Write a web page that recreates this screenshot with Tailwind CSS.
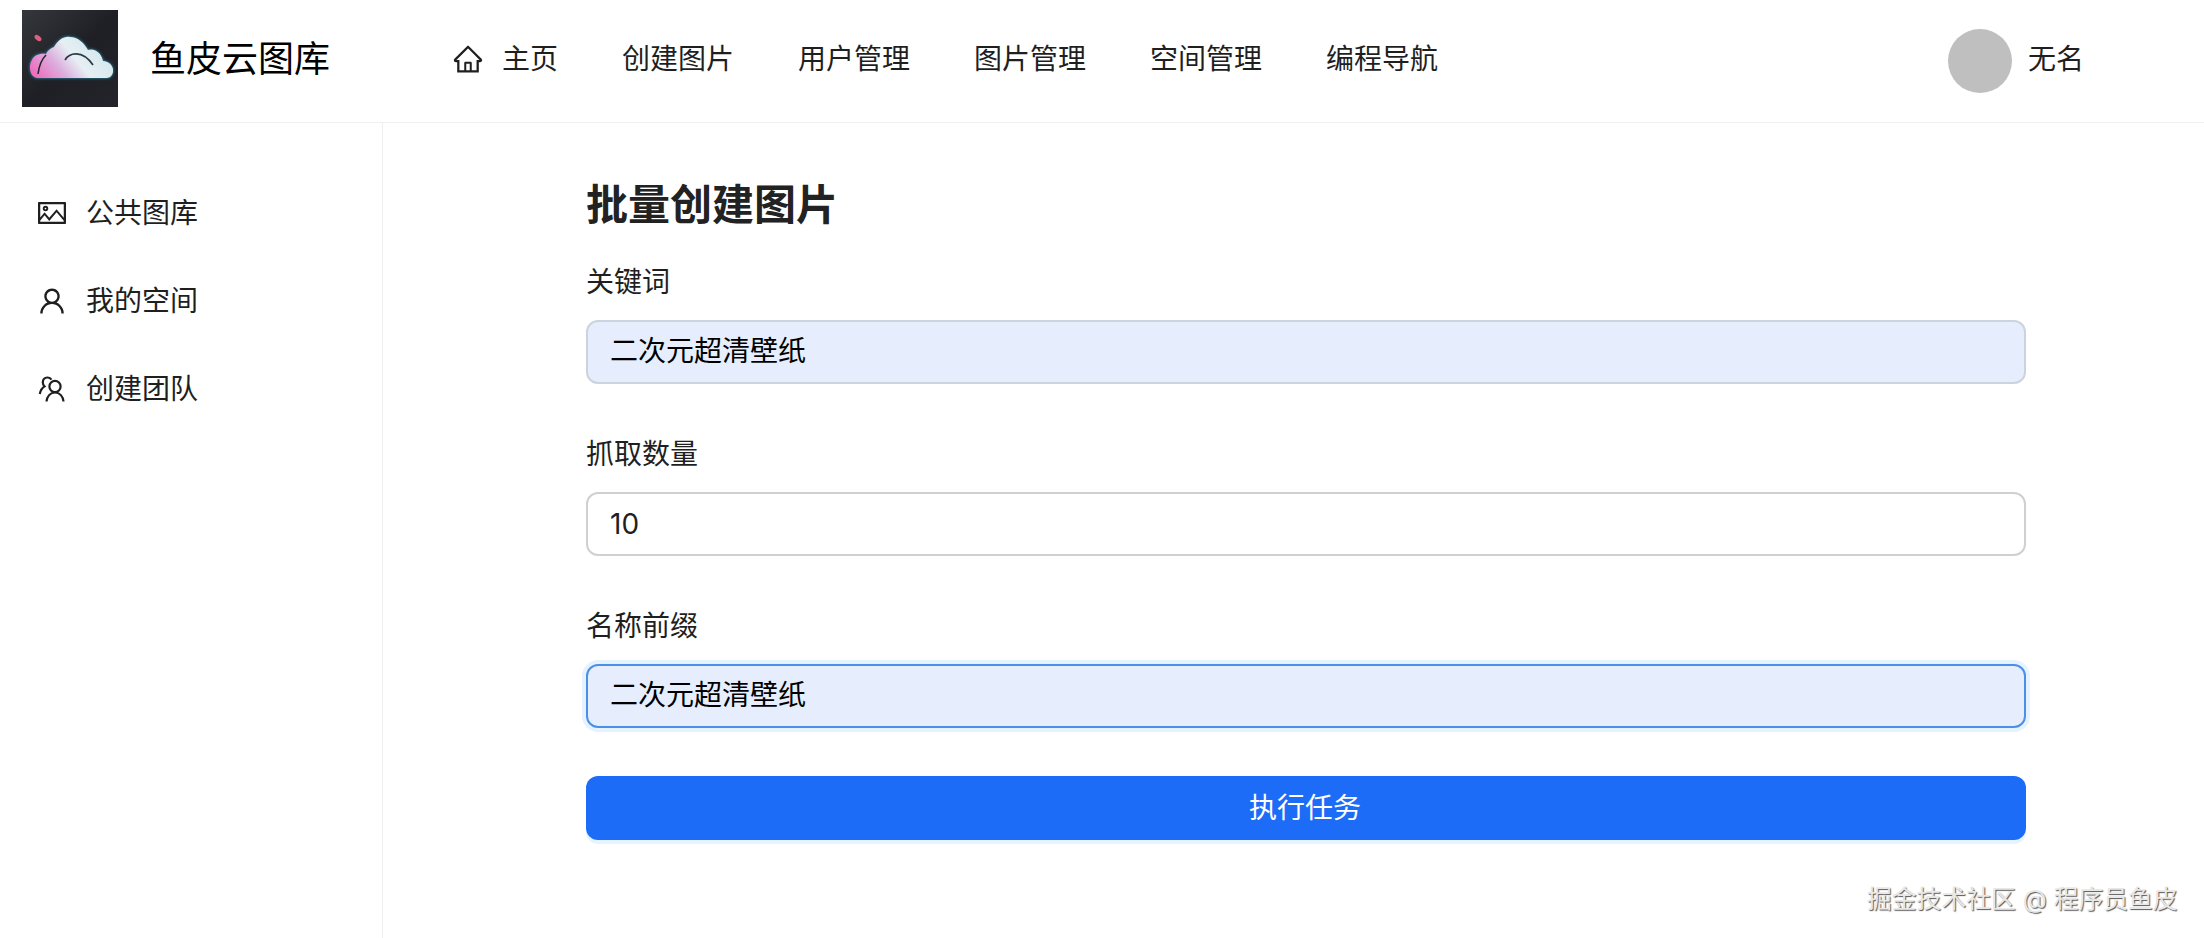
<!DOCTYPE html>
<html lang="zh-CN">
<head>
  <meta charset="UTF-8">
  <title>鱼皮云图库</title>
  <script src="https://cdn.jsdelivr.net/npm/@tailwindcss/browser@4"></script>
</head>
<body class="bg-white text-[#1f1f1f] font-['Inter','Noto_Sans_CJK_SC',sans-serif] text-[28px] overflow-hidden">
  <div class="relative h-[938px] flex flex-col">

    <!-- Header -->
    <header class="h-[123px] shrink-0 flex items-center border-b border-[#f0f0f0]">
      <a class="flex items-center ml-[22px] w-[430px] -mt-[5px]">
        <svg class="w-[96px] h-[97px]" viewBox="0 0 96 97">
          <defs>
            <linearGradient id="logo-bg" x1="0" y1="0" x2="1" y2="1">
              <stop offset="0" stop-color="#34373b"/>
              <stop offset="0.5" stop-color="#1f2026"/>
              <stop offset="1" stop-color="#22242a"/>
            </linearGradient>
            <linearGradient id="cloud" x1="0" y1="0.75" x2="1" y2="0.35">
              <stop offset="0" stop-color="#ee6fc0"/>
              <stop offset="0.3" stop-color="#dcaedd"/>
              <stop offset="0.55" stop-color="#e6eff3"/>
              <stop offset="1" stop-color="#cfe6ec"/>
            </linearGradient>
            <filter id="glow" x="-20%" y="-20%" width="140%" height="140%"><feGaussianBlur stdDeviation="1.5"/></filter>
          </defs>
          <rect width="96" height="97" fill="url(#logo-bg)"/>
          <ellipse cx="16" cy="28" rx="4" ry="2.4" transform="rotate(40 16 28)" fill="#d9607f"/>
          <path d="M16 68 C8 68 6 56 10 50 C12 45 18 43 24 44 C26 40 29 38 32 37 C36 30 42 26 48 27 C56 27 62 33 66 40 C72 38 79 42 81 51 C87 51 92 56 91 62 C90 67 87 68 83 68 Z" fill="#2f9fc4" filter="url(#glow)"/>
          <path d="M16 70 H88" stroke="#0e0f13" stroke-width="3" filter="url(#glow)"/>
          <path d="M16 68 C8 68 6 56 10 50 C12 45 18 43 24 44 C26 40 29 38 32 37 C36 30 42 26 48 27 C56 27 62 33 66 40 C72 38 79 42 81 51 C87 51 92 56 91 62 C90 67 87 68 83 68 Z" fill="url(#cloud)"/>
          <path d="M24 45 C19 50 17 56 16 64" fill="none" stroke="#23252d" stroke-width="1.5"/>
          <path d="M43 50 C47 43 60 39 71 55" fill="none" stroke="#2b3a48" stroke-width="1.7"/>
        </svg>
        <span class="ml-[32px] text-[36px] leading-[48px] text-black whitespace-nowrap">鱼皮云图库</span>
      </a>

      <nav class="flex items-center gap-[64px] -mt-[5px]">
        <a class="flex items-center gap-[18px]">
          <svg class="w-[32px] h-[32px]" viewBox="0 0 1024 1024" fill="currentColor"><path d="M946.5 505L560.1 118.8l-25.9-25.9a31.5 31.5 0 0 0-44.4 0L77.5 505a63.9 63.9 0 0 0-18.8 46c.4 35.2 29.7 63.3 64.9 63.3h42.5V940h691.8V614.3h43.4c17.1 0 33.2-6.7 45.3-18.8a63.6 63.6 0 0 0 18.7-45.3c0-17-6.7-33.1-18.8-45.2zM568 868H456V664h112v204zm217.9-325.7V868H632V640c0-22.1-17.9-40-40-40H432c-22.1 0-40 17.9-40 40v228H238.1V542.3h-96l370-369.7 23.1 23.1L882 542.3h-96.1z"/></svg>
          <span>主页</span>
        </a>
        <a>创建图片</a>
        <a>用户管理</a>
        <a>图片管理</a>
        <a>空间管理</a>
        <a>编程导航</a>
      </nav>

      <div class="ml-auto mr-[120px] flex items-center gap-[16px] -mt-[1px]">
        <div class="w-[64px] h-[64px] rounded-full bg-[#bfbfbf]"></div>
        <span class="-mt-[3px]">无名</span>
      </div>
    </header>

    <div class="flex flex-1">
      <!-- Sidebar -->
      <aside class="w-[383px] shrink-0 border-r border-[#f0f0f0] pt-[58px] pl-[36px] flex flex-col gap-[24px]">
        <a class="flex items-center gap-[18px] h-[64px]">
          <svg class="w-[32px] h-[32px]" viewBox="0 0 1024 1024" fill="currentColor"><path d="M928 160H96c-17.7 0-32 14.3-32 32v640c0 17.7 14.3 32 32 32h832c17.7 0 32-14.3 32-32V192c0-17.7-14.3-32-32-32zm-40 632H136v-39.9l138.5-164.3 150.1 178L658.1 489 888 761.6V792zm0-129.8L664.2 396.8c-3.2-3.8-9-3.8-12.2 0L424.6 666.4l-144-170.7c-3.2-3.8-9-3.8-12.2 0L136 652.7V232h752v430.2zM304 456a88 88 0 1 0 0-176 88 88 0 0 0 0 176zm0-116c15.5 0 28 12.5 28 28s-12.5 28-28 28-28-12.5-28-28 12.5-28 28-28z"/></svg>
          <span>公共图库</span>
        </a>
        <a class="flex items-center gap-[18px] h-[64px]">
          <svg class="w-[32px] h-[32px]" viewBox="0 0 1024 1024" fill="currentColor"><path d="M858.5 763.6a374 374 0 0 0-80.6-119.5 375.63 375.63 0 0 0-119.5-80.6c-.4-.2-.8-.3-1.2-.5C719.5 518 760 444.7 760 362c0-137-111-248-248-248S264 225 264 362c0 82.7 40.5 156 102.8 201.1-.4.2-.8.3-1.2.5-44.8 18.9-85 46-119.5 80.6a375.63 375.63 0 0 0-80.6 119.5A371.7 371.7 0 0 0 136 901.8a8 8 0 0 0 8 8.2h60c4.4 0 7.9-3.5 8-7.8 2-77.2 33-149.5 87.8-204.3 56.7-56.7 132-87.9 212.2-87.9s155.5 31.2 212.2 87.9C779 752.7 810 825 812 902.2c.1 4.4 3.6 7.8 8 7.8h60a8 8 0 0 0 8-8.2c-1-47.8-10.9-94.3-29.5-138.2zM512 534c-45.9 0-89.1-17.9-121.6-50.4S340 407.9 340 362c0-45.9 17.9-89.1 50.4-121.6S466.1 190 512 190s89.1 17.9 121.6 50.4S684 316.1 684 362c0 45.9-17.9 89.1-50.4 121.6S557.9 534 512 534z"/></svg>
          <span>我的空间</span>
        </a>
        <a class="flex items-center gap-[18px] h-[64px]">
          <svg class="w-[32px] h-[32px]" viewBox="0 0 32 32" fill="none" stroke="currentColor" stroke-width="2.2">
            <circle cx="19" cy="13.5" r="5.6"/>
            <path d="M10.5 28.5c.3-5 3.8-9 8.5-9s8.200 4 8.500 9"/>
            <path d="M15.500 6.700C14.500 5.200 12.900 4.400 11.500 4.500c-2.800.2-4.700 2.300-4.700 5 0 1.500.7 2.900 1.700 3.800C6 15 4.300 17.600 3.800 21"/>
          </svg>
          <span>创建团队</span>
        </a>
      </aside>

      <!-- Form -->
      <main class="flex-1 pt-[54px] pl-[203px]">
        <form class="w-[1440px]">
          <h2 class="text-[42px] leading-[56px] font-bold mb-[27px] text-[#222]">批量创建图片</h2>

          <div class="mb-[48px]">
            <label class="block h-[44px] leading-[44px] mb-[16px]">关键词</label>
            <input class="block w-full h-[64px] px-[22px] pb-[6px] rounded-[12px] border-2 border-[#cbd3df] bg-[#e6eefd] text-black outline-none" value="二次元超清壁纸">
          </div>

          <div class="mb-[48px]">
            <label class="block h-[44px] leading-[44px] mb-[16px]">抓取数量</label>
            <input class="block w-full h-[64px] px-[22px] rounded-[12px] border-2 border-[#d0d0d0] bg-white outline-none" value="10">
          </div>

          <div class="mb-[48px]">
            <label class="block h-[44px] leading-[44px] mb-[16px]">名称前缀</label>
            <input class="block w-full h-[64px] px-[22px] pb-[6px] rounded-[12px] border-2 border-[#4a8fe8] bg-[#e6eefd] text-black outline-none shadow-[0_0_0_4px_#e6f2ff]" value="二次元超清壁纸">
          </div>

          <button type="button" class="block w-full h-[64px] pr-[2px] rounded-[12px] bg-[#1c6cf7] text-white shadow-[0_4px_0_#e6f4ff]">执行任务</button>
        </form>
      </main>
    </div>

    <!-- Watermark -->
    <div class="absolute left-[1867px] top-[884px] text-[24.8px] leading-[30px] whitespace-nowrap text-[#e8e8e8] [text-shadow:1px_1px_1px_#555]">掘金技术社区 @ 程序员鱼皮</div>
  </div>
</body>
</html>
